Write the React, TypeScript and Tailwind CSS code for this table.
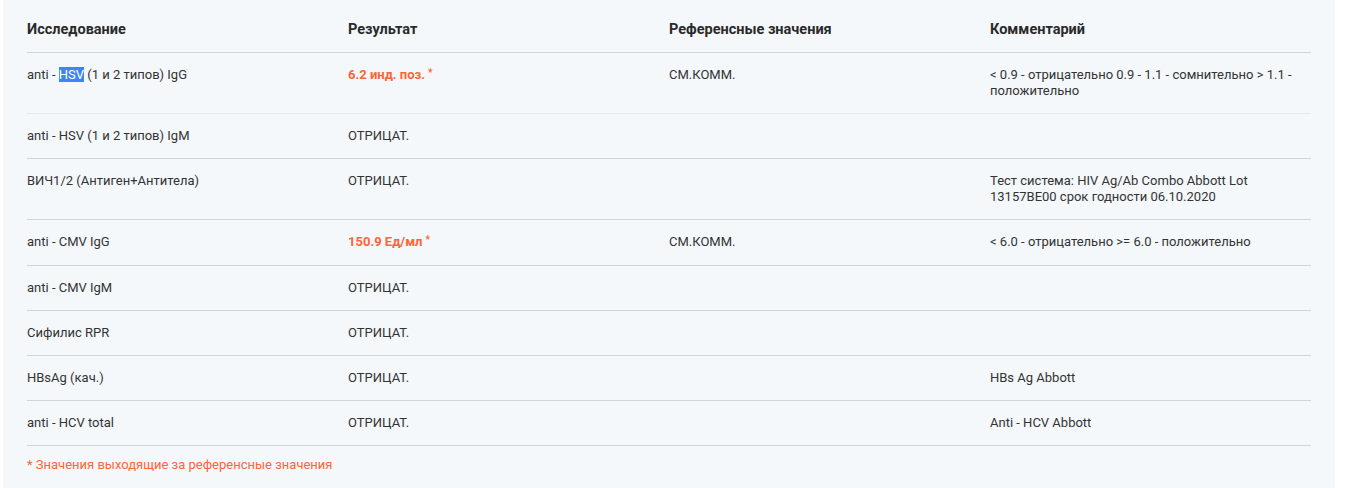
import React from "react";

type Row = {
  name: React.ReactNode;
  result: string;
  high?: boolean;
  ref?: string;
  comment?: React.ReactNode;
};

const rows: Row[] = [
  {
    name: (
      <>
        anti - <span className="bg-[#3d84f7] text-white">HSV</span> (1 и 2 типов) IgG
      </>
    ),
    result: "6.2 инд. поз.",
    high: true,
    ref: "СМ.КОММ.",
    comment: (
      <>
        &lt; 0.9 - отрицательно 0.9 - 1.1 - сомнительно &gt; 1.1 -
        <br />
        положительно
      </>
    ),
  },
  { name: "anti - HSV (1 и 2 типов) IgM", result: "ОТРИЦАТ." },
  {
    name: "ВИЧ1/2 (Антиген+Антитела)",
    result: "ОТРИЦАТ.",
    comment: (
      <>
        Тест система: HIV Ag/Ab Combo Abbott Lot
        <br />
        13157BE00 срок годности 06.10.2020
      </>
    ),
  },
  {
    name: "anti - CMV IgG",
    result: "150.9 Ед/мл",
    high: true,
    ref: "СМ.КОММ.",
    comment: "< 6.0 - отрицательно >= 6.0 - положительно",
  },
  { name: "anti - CMV IgM", result: "ОТРИЦАТ." },
  { name: "Сифилис RPR", result: "ОТРИЦАТ." },
  { name: "HBsAg (кач.)", result: "ОТРИЦАТ.", comment: "HBs Ag Abbott" },
  { name: "anti - HCV total", result: "ОТРИЦАТ.", comment: "Anti - HCV Abbott" },
];

export default function App() {
  return (
    <div className="w-[1353px] h-[488px] bg-white" style={{ fontFamily: "Roboto, 'Liberation Sans', sans-serif" }}>
      <div className="ml-[3px] w-[1332px] h-[488px] bg-[#f4f8fb] pl-[24px] pt-[8px]">
        <div className="w-[1284px]">
          <div className="grid grid-cols-4 border-b border-[#cfd4d9] py-[14px] text-[14.5px] leading-[16px] font-bold text-[#2a2a2a]">
            <div>Исследование</div>
            <div>Результат</div>
            <div>Референсные значения</div>
            <div>Комментарий</div>
          </div>
          {rows.map((r, i) => (
            <div
              key={i}
              className={`grid grid-cols-4 py-[14px] text-[13px] leading-[16px] text-[#333] border-b ${
                i === 0 ? "border-[#e4e9ee]" : "border-[#cfd4d9]"
              }`}
            >
              <div>{r.name}</div>
              <div className={r.high ? "font-bold text-[#fd6535]" : ""}>
                {r.result}
                {r.high && <span className="relative top-[-3px] text-[10px] ml-[3px]">*</span>}
              </div>
              <div>{r.ref}</div>
              <div>{r.comment}</div>
            </div>
          ))}
          <div className="pt-[11px] text-[13px] leading-[16px] text-[#fd6535]">
            * Значения выходящие за референсные значения
          </div>
        </div>
      </div>
    </div>
  );
}
